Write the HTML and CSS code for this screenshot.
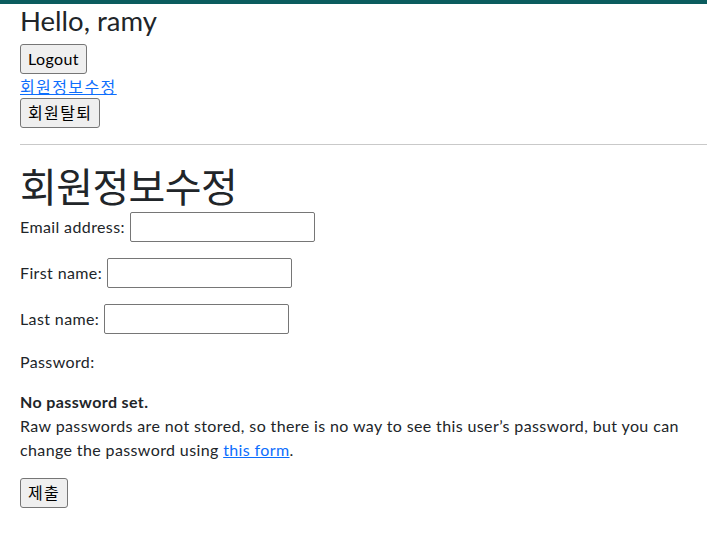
FILE: index.html
```html
<!DOCTYPE html>
<html lang="ko">
<head>
<meta charset="utf-8">
<title>회원정보수정</title>
<link rel="stylesheet" href="styles.css">
</head>
<body>
<div class="topbar"></div>
<div class="container">
  <h3 class="hello">Hello, ramy</h3>
  <form class="inline-form"><button type="button" class="btn">Logout</button></form>
  <a href="#" class="link ko">회원정보수정</a>
  <form class="inline-form"><button type="button" class="btn ko">회원탈퇴</button></form>
  <hr class="divider">
  <h1 class="title">회원정보수정</h1>
  <form class="profile-form">
    <p class="row"><label>Email address:</label> <input type="email" class="field"></p>
    <p class="row"><label>First name:</label> <input type="text" class="field"></p>
    <p class="row"><label>Last name:</label> <input type="text" class="field"></p>
    <p class="row-text"><label>Password:</label></p>
    <div class="helptext">
      <strong class="strong">No password set.</strong>
      <p class="help-p">Raw passwords are not stored, so there is no way to see this user’s password, but you can change the password using <a href="#" class="link">this form</a>.</p>
    </div>
    <button type="button" class="btn ko">제출</button>
  </form>
</div>
</body>
</html>
```
FILE: styles.css
```css
* { box-sizing: border-box; }
html, body { margin: 0; padding: 0; background: #fff; }
body {
  font-family: "Lato", "Noto Sans CJK KR", sans-serif;
  font-size: 16px;
  line-height: 1.5;
  letter-spacing: 0.38px;
  color: #212529;
}
.topbar { height: 4px; background: #0b5c5e; }
.container { padding: 0 20px; }
.hello {
  margin: 0 0 6px 0;
  font-size: 27.5px;
  font-weight: 400;
  line-height: 34px;
  letter-spacing: 0;
}
.inline-form { margin: 0; }
.btn {
  font-family: "Lato", "Noto Sans CJK KR", sans-serif;
  font-size: 16px;
  line-height: 24px;
  height: 30px;
  padding: 2px 7px;
  margin: 0;
  letter-spacing: 0.38px;
  color: #000;
  background: #efefef;
  border: 1px solid #767676;
  border-radius: 3px;
  display: block;
}
.btn.ko, .link.ko { letter-spacing: 1.4px; }
.link {
  color: #0d6efd;
  text-decoration: underline;
}
a.link.ko { display: inline-block; line-height: 24px; vertical-align: top; font-family: "Noto Sans CJK KR", sans-serif; }
.divider {
  margin: 16px -20px 16px 0;
  border: 0;
  border-top: 1px solid #c9c9c9;
  height: 0;
}
.title {
  margin: 0 0 3px 0;
  font-family: "Noto Sans CJK KR", sans-serif;
  font-size: 40px;
  font-weight: 400;
  line-height: 48px;
  letter-spacing: -0.6px;
}
.profile-form { margin: 0; }
.row { margin: 0 0 16px 0; height: 30px; display: flex; align-items: center; gap: 5px; }
.field {
  width: 185px;
  height: 30px;
  border: 1px solid #767676;
  border-radius: 2px;
  padding: 1px 2px;
  font-size: 16px;
  background: #fff;
}
.row-text { margin: 0 0 16px 0; line-height: 24px; }
.helptext { margin: 0 0 16px 0; }
.strong { display: block; font-weight: 700; line-height: 24px; }
.help-p { margin: 0; line-height: 24px; }
```
